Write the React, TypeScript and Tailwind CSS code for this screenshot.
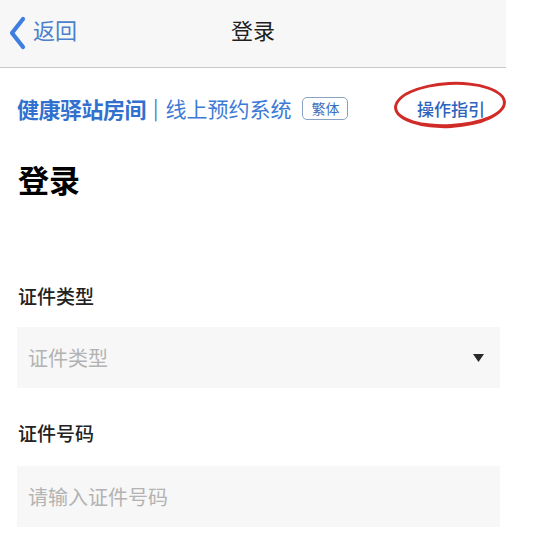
export default function App() {
  return (
    <div className="w-[537px] h-[538px] overflow-hidden bg-white font-['Noto_Sans_CJK_SC','Noto_Sans',sans-serif]">
      <header className="relative w-[506px] h-[68px] bg-[#f7f7f7] border-b border-[#c9c9c9] flex items-center justify-center">
        <div className="absolute left-[8px] top-0 h-full flex items-center">
          <svg width="18" height="34" viewBox="0 0 18 34" className="mt-[-1px]">
            <path d="M15 3 L4 17 L15 31" fill="none" stroke="#3e7ee0" strokeWidth="4.2" strokeLinecap="round" strokeLinejoin="round" />
          </svg>
          <span className="ml-[7px] mt-[-10px] text-[22px] leading-none text-[#4a80cc]">返回</span>
        </div>
        <h1 className="mt-[-10px] text-[22px] leading-none text-[#1f1f1f]">登录</h1>
      </header>

      <div className="relative flex items-center h-[66px] pl-[17px] pt-[14px]">
        <span className="text-[22px] font-bold leading-none text-[#3170cf] tracking-[-0.5px]">健康驿站房间</span>
        <span className="mx-[7px] text-[20px] leading-none text-[#3d7ad6]">|</span>
        <span className="text-[21px] leading-none text-[#3d7ad6]">线上预约系统</span>
        <span className="ml-[11px] px-[8px] h-[23px] flex items-center border border-[#8aa2c2] rounded-[5px] text-[14px] leading-none text-[#3a6fc0]">繁体</span>
        <span className="ml-auto mr-[52px] text-[17px] font-medium leading-none text-[#2e63bd]">操作指引</span>
        <div className="absolute left-[394px] top-[14px] w-[112px] h-[46px] rounded-[50%] border-[3px] border-b-[4px] border-[#d12b28] -rotate-3" />
      </div>

      <div className="pl-[18px] pt-[29px]">
        <h2 className="text-[31px] font-bold leading-none text-black">登录</h2>
      </div>

      <div className="pl-[17px] w-[500px] pt-[92px]">
        <label className="block pl-px text-[19px] font-medium leading-none text-[#222]">证件类型</label>
        <div className="mt-[22px] h-[61px] bg-[#f7f7f7] flex items-center pl-[11px] pr-[16px]">
          <span className="text-[20px] leading-none text-[#b3b3b3]">证件类型</span>
          <svg width="11" height="8" viewBox="0 0 11 8" className="ml-auto">
            <path d="M0 0 H11 L5.5 8 Z" fill="#2a2a2a" />
          </svg>
        </div>

        <label className="block mt-[35px] pl-px text-[19px] font-medium leading-none text-[#222]">证件号码</label>
        <div className="mt-[24px] h-[61px] bg-[#f7f7f7] flex items-center pl-[11px]">
          <span className="text-[20px] leading-none text-[#b3b3b3]">请输入证件号码</span>
        </div>
      </div>
    </div>
  );
}
